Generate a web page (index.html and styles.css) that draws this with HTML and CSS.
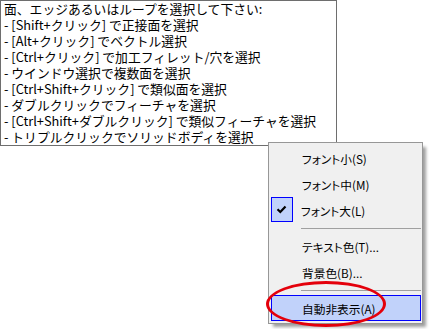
FILE: index.html
```html
<!DOCTYPE html>
<html lang="ja">
<head>
<meta charset="utf-8">
<link rel="stylesheet" href="styles.css">
</head>
<body>
<div class="stage">
  <div class="hint">
    <div>面、エッジあるいはループを選択して下さい:</div>
    <div>- [Shift+クリック] で正接面を選択</div>
    <div>- [Alt+クリック] でベクトル選択</div>
    <div>- [Ctrl+クリック] で加工フィレット/穴を選択</div>
    <div>- ウインドウ選択で複数面を選択</div>
    <div>- [Ctrl+Shift+クリック] で類似面を選択</div>
    <div>- ダブルクリックでフィーチャを選択</div>
    <div>- [Ctrl+Shift+ダブルクリック] で類似フィーチャを選択</div>
    <div>- トリプルクリックでソリッドボディを選択</div>
  </div>
  <div class="menu">
    <div class="item"><span class="gutter"></span><span class="label">フォント小(S)</span></div>
    <div class="item"><span class="gutter"></span><span class="label">フォント中(M)</span></div>
    <div class="item"><span class="gutter checked"><svg width="22" height="25" viewBox="0 0 22 25"><path d="M6.5 12.3 L9.3 15 L14.5 9.4" fill="none" stroke="#000" stroke-width="2.2"/></svg></span><span class="label">フォント大(L)</span></div>
    <div class="sep"></div>
    <div class="item"><span class="gutter"></span><span class="label">テキスト色(T)...</span></div>
    <div class="item"><span class="gutter"></span><span class="label">背景色(B)...</span></div>
    <div class="sep sep2"></div>
    <div class="item active"><span class="gutter"></span><span class="label">自動非表示(A)</span></div>
  </div>
  <div class="ring"></div>
</div>
</body>
</html>
```

FILE: styles.css
```css
html, body {
  margin: 0;
  padding: 0;
  background: #ffffff;
}
.stage {
  position: relative;
  width: 429px;
  height: 329px;
  overflow: hidden;
}
.hint {
  box-sizing: border-box;
  width: 337px;
  height: 146px;
  border: 1px solid #6e6e6e;
  padding: 0 0 0 3px;
  font-family: "Noto Sans CJK JP", "Noto Sans", sans-serif;
  font-size: 12.8px;
  line-height: 16px;
  color: #000;
  white-space: nowrap;
  overflow: hidden;
}
.hint div {
  height: 16px;
}
.menu {
  position: absolute;
  left: 268px;
  top: 142px;
  box-sizing: border-box;
  width: 155px;
  padding: 2px 1px 2px 2px;
  background: #f0f0f0;
  border: 1px solid #979797;
  box-shadow: 4px 4px 3px -1px rgba(0, 0, 0, 0.38);
  font-family: "Noto Sans CJK JP", "Noto Sans", sans-serif;
  font-size: 11.7px;
  font-feature-settings: "palt";
  color: #000;
}
.item {
  display: flex;
  align-items: center;
  height: 26px;
  box-sizing: border-box;
  border: 1px solid transparent;
}
.gutter {
  width: 22px;
  height: 25px;
  margin-right: 8px;
  box-sizing: border-box;
  flex: none;
}
.gutter.checked {
  border: 1px solid #0000ff;
  background: #c1d2fa;
  margin-left: -1px;
  margin-top: -1px;
}
.gutter.checked svg {
  display: block;
  margin: -1px;
}
.label {
  white-space: nowrap;
}
.sep {
  height: 10px;
  margin-left: 30px;
  margin-right: 0;
  position: relative;
}
.sep::after {
  content: "";
  position: absolute;
  left: 0;
  right: 0;
  top: 5px;
  height: 1px;
  background: #a0a0a0;
}
.sep2 {
  height: 10px;
}
.item.active {
  background: #c1d2fa;
  border-color: #0000ff;
}
.ring {
  position: absolute;
  left: 266px;
  top: 281px;
  width: 120px;
  height: 46px;
  box-sizing: border-box;
  border: 3px solid #e4000b;
  border-radius: 50%;
}
```
